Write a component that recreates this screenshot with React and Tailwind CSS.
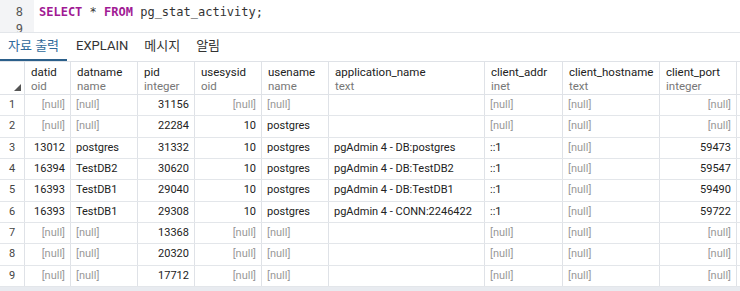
import React from 'react';

const columns = [
  { name: 'datid', type: 'oid', w: 'w-[46px]', num: true },
  { name: 'datname', type: 'name', w: 'w-[67px]' },
  { name: 'pid', type: 'integer', w: 'w-[57px]', num: true },
  { name: 'usesysid', type: 'oid', w: 'w-[67px]', num: true },
  { name: 'usename', type: 'name', w: 'w-[67px]' },
  { name: 'application_name', type: 'text', w: 'w-[156px]' },
  { name: 'client_addr', type: 'inet', w: 'w-[78px]' },
  { name: 'client_hostname', type: 'text', w: 'w-[97px]' },
  { name: 'client_port', type: 'integer', w: 'w-[77px]', num: true },
];

const N = null;
const rows = [
  [N, N, '31156', N, N, '', N, N, N],
  [N, N, '22284', '10', 'postgres', '', N, N, N],
  ['13012', 'postgres', '31332', '10', 'postgres', 'pgAdmin 4 - DB:postgres', '::1', N, '59473'],
  ['16394', 'TestDB2', '30620', '10', 'postgres', 'pgAdmin 4 - DB:TestDB2', '::1', N, '59547'],
  ['16393', 'TestDB1', '29040', '10', 'postgres', 'pgAdmin 4 - DB:TestDB1', '::1', N, '59490'],
  ['16393', 'TestDB1', '29308', '10', 'postgres', 'pgAdmin 4 - CONN:2246422', '::1', N, '59722'],
  [N, N, '13368', N, N, '', N, N, N],
  [N, N, '20320', N, N, '', N, N, N],
  [N, N, '17712', N, N, '', N, N, N],
];

const tabs = ['자료 출력', 'EXPLAIN', '메시지', '알림'];

const App = () => {
  return (
    <div className="w-[740px] h-[291px] overflow-hidden bg-white font-['Roboto','Noto_Sans_CJK_KR',sans-serif]">
      {/* Query editor */}
      <div className="flex h-[33px] overflow-hidden border-b border-[#e3e6ea] font-['DejaVu_Sans_Mono',monospace] text-[12px] leading-[17px]">
        <div className="w-[34px] shrink-0 bg-[#f3f4f6] pt-[4px] pr-[11px] text-right text-[#555]">
          <div>8</div>
          <div>9</div>
        </div>
        <div className="pt-[4px] pl-[5px] text-[#333]">
          <span className="font-bold text-[#a11a94]">SELECT</span> * <span className="font-bold text-[#a11a94]">FROM</span> pg_stat_activity;
        </div>
      </div>

      {/* Result tabs */}
      <div className="flex h-[28px] items-stretch text-[13px] text-[#333]">
        {tabs.map((t, i) => (
          <div
            key={t}
            className={
              i === 0
                ? 'flex items-center px-[8px] mr-[1px] text-[#2f6a9b] border-b-2 border-[#2b5f8a]'
                : 'flex items-center px-[8px] border-b-2 border-transparent'
            }
          >
            {t}
          </div>
        ))}
      </div>

      {/* Grid */}
      <div className="text-[11px] text-[#222]">
        <div className="flex h-[34px] border-y border-[#dfe2e7]">
          <div className="relative w-[25px] shrink-0 border-r border-[#dfe2e7]">
            <div className="absolute right-[3px] bottom-[3px] w-0 h-0 border-l-[7px] border-l-transparent border-b-[7px] border-b-[#555]" />
          </div>
          {columns.map((c) => (
            <div key={c.name} className={`${c.w} shrink-0 border-r border-[#dfe2e7] pl-[6px] pt-[3px] leading-[14px] text-[11.5px]`}>
              <div className="text-[#222]">{c.name}</div>
              <div className="text-[#777]">{c.type}</div>
            </div>
          ))}
          <div className="flex-1" />
        </div>
        {rows.map((r, i) => (
          <div key={i} className="flex h-[21.33px] border-b border-[#e3e6ea]">
            <div className="w-[25px] shrink-0 border-r border-[#dfe2e7] flex items-center justify-center text-[#444]">
              {i + 1}
            </div>
            {columns.map((c, j) => {
              const v = r[j];
              return (
                <div
                  key={c.name}
                  className={`${c.w} shrink-0 border-r border-[#dfe2e7] flex items-center px-[5px] whitespace-nowrap overflow-hidden ${c.num ? 'justify-end' : ''}`}
                >
                  {v === null ? <span className="text-[#999]">[null]</span> : v}
                </div>
              );
            })}
            <div className="flex-1" />
          </div>
        ))}
        <div className="h-[4px] bg-[#e8ebf0]" />
      </div>
    </div>
  );
};

export default App;
